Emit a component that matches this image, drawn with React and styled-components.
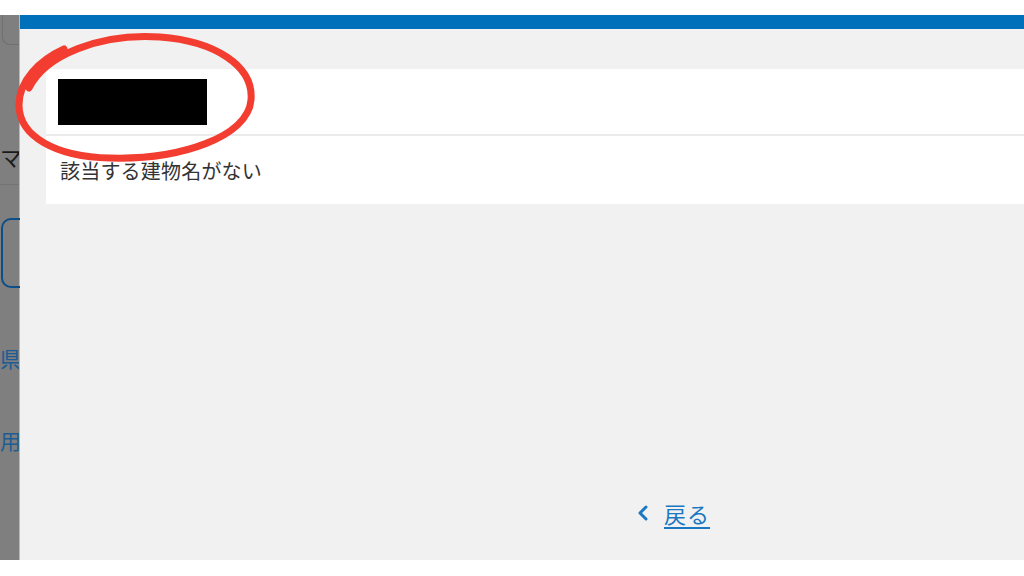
import styled, { createGlobalStyle } from "styled-components";

const GlobalStyle = createGlobalStyle`
  html, body {
    margin: 0;
    padding: 0;
    background: #ffffff;
  }
  body {
    font-family: "Noto Sans CJK JP", "Noto Sans", sans-serif;
  }
`;

const Page = styled.div`
  width: 1024px;
  height: 576px;
  padding: 15px 0 16px;
  box-sizing: border-box;
  overflow: hidden;
  position: relative;
`;

const Stage = styled.div`
  display: flex;
  height: 100%;
`;

// the page behind the dialog, dimmed by the overlay
const Backdrop = styled.div`
  width: 20px;
  flex: none;
  background: #7f7f7f;
  display: flex;
  flex-direction: column;
  overflow: hidden;
`;

const BackHeader = styled.div`
  height: 29px;
  margin-left: 2px;
  width: 40px;
  border-left: 1px solid #6f6f6f;
  border-bottom: 1px solid #6f6f6f;
  border-bottom-left-radius: 8px;
  flex: none;
`;

const BackTitle = styled.div`
  margin-top: 95px;
  height: 44px;
  font-size: 22px;
  line-height: 32px;
  color: #1a1a1a;
  border-bottom: 1px solid #747474;
  flex: none;
`;

const BackField = styled.div`
  margin: 33px 0 0 1px;
  width: 40px;
  height: 70px;
  border: 2px solid #0b4f86;
  border-radius: 10px;
  box-sizing: border-box;
  position: relative;
  flex: none;
  &::after {
    content: "";
    position: absolute;
    left: 17px;
    top: 24px;
    width: 2px;
    height: 2px;
    background: #4a3a2a;
    box-shadow: 0 5px 0 #4a3a2a, 0 10px 0 #4a3a2a;
  }
`;

const BackLink = styled.div`
  margin-top: ${(p) => p.$top}px;
  font-size: 21px;
  line-height: 24px;
  color: #1d5c92;
  white-space: nowrap;
  flex: none;
`;

const Modal = styled.div`
  flex: 1;
  display: flex;
  flex-direction: column;
  background: #f1f1f1;
  border-top: 14px solid #0070bb;
  box-shadow: -1px 0 0 #b9b9b9;
`;

const Card = styled.div`
  margin: 40px 0 0 26px;
  background: #ffffff;
  display: flex;
  flex-direction: column;
`;

const CardRow = styled.div`
  display: flex;
  align-items: center;
  height: ${(p) => p.$h}px;
  padding: 0 14px;
  border-top: ${(p) => (p.$divider ? "2px solid #ebebeb" : "none")};
`;

const Redacted = styled.div`
  width: 149px;
  height: 46px;
  margin-left: -2px;
  background: #000000;
`;

const RowText = styled.span`
  font-size: 20px;
  color: #333333;
  letter-spacing: 0.2px;
`;

const Footer = styled.div`
  margin-top: auto;
  height: 63px;
  display: flex;
  align-items: flex-start;
  padding-left: 617px;
`;

const BackButton = styled.a`
  display: flex;
  align-items: center;
  gap: 13px;
  color: #1a78c2;
  font-size: 22px;
  line-height: 32px;
  text-decoration: underline;
  text-underline-offset: 4px;
  text-decoration-thickness: 2px;
  cursor: pointer;
  span {
    letter-spacing: 1px;
  }
`;

const Annotation = styled.svg`
  position: absolute;
  left: 0;
  top: 0;
  pointer-events: none;
`;

const Chevron = () => (
  <svg width="14" height="16" viewBox="0 0 14 16">
    <path d="M9 2 L3 8 L9 14" fill="none" stroke="#1a78c2" strokeWidth="3" strokeLinecap="round" strokeLinejoin="round" />
  </svg>
);

const App = () => {
  return (
    <Page>
      <GlobalStyle />
      <Stage>
        <Backdrop>
          <BackHeader />
          <BackTitle>マ</BackTitle>
          <BackField />
          <BackLink $top={58}>県</BackLink>
          <BackLink $top={58}>用</BackLink>
        </Backdrop>
        <Modal>
          <Card>
            <CardRow $h={65}>
              <Redacted />
            </CardRow>
            <CardRow $h={68} $divider>
              <RowText>該当する建物名がない</RowText>
            </CardRow>
          </Card>
          <Footer>
            <BackButton>
              <Chevron />
              <span>戻る</span>
            </BackButton>
          </Footer>
        </Modal>
      </Stage>
      <Annotation width="1024" height="576" viewBox="0 0 1024 576">
        <path
          d="M29 88 C45 55, 100 33, 160 37 C215 41, 254 66, 251 100 C248 137, 180 160, 110 158 C55 157, 19 136, 19 105 C19 80, 40 60, 64 49"
          fill="none"
          stroke="#f23d30"
          strokeWidth="7"
          strokeLinecap="round"
        />
      </Annotation>
    </Page>
  );
};

export default App;
